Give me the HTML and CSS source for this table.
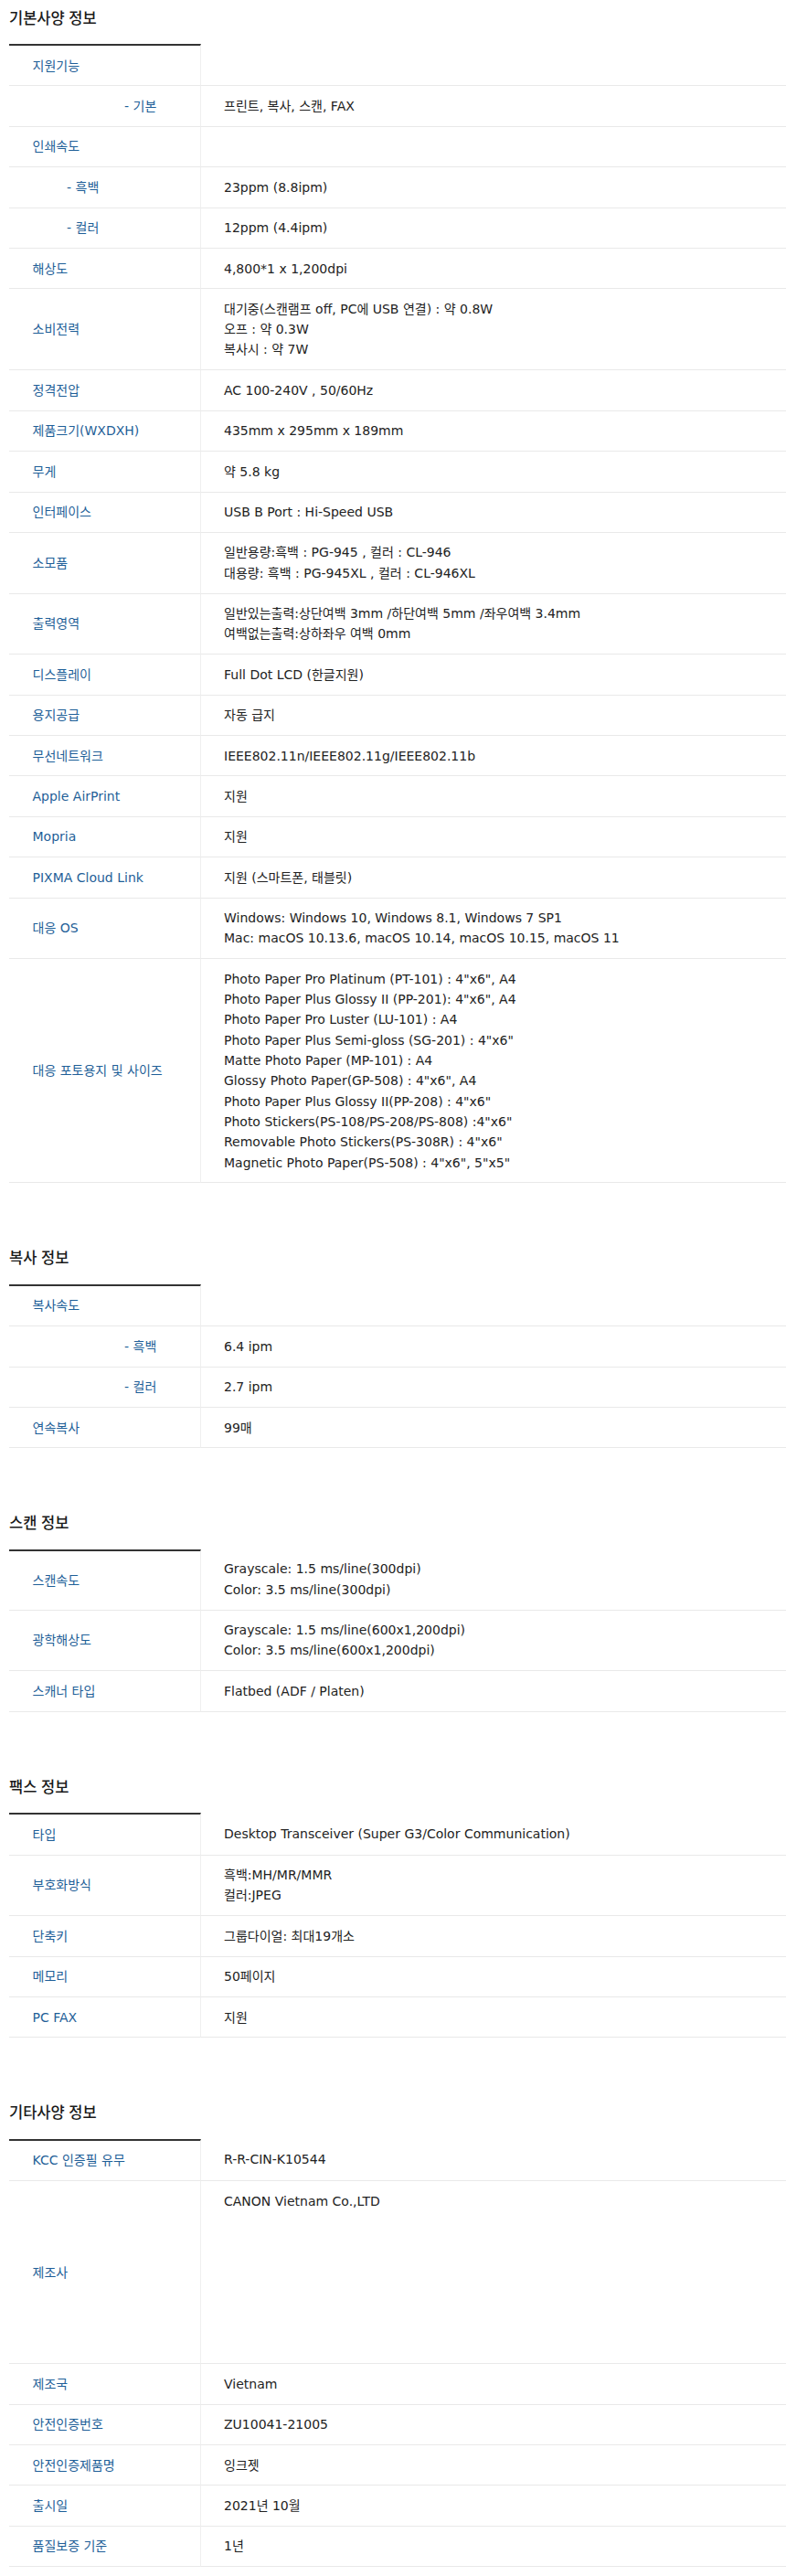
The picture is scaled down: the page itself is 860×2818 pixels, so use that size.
FILE: index.html
```html
<!DOCTYPE html>
<html lang="ko">
<head>
  <meta charset="UTF-8" />
  <meta name="viewport" content="width=device-width, initial-scale=1.0"/>
  <title>제품 사양</title>
  <link rel="stylesheet" href="styles.css">
</head>
<body>

<div class="spec">

  <section class="spec-group">
    <h3 class="spec-title">기본사양 정보</h3>
    <table class="spec-table">
      <colgroup><col class="col-label"><col></colgroup>
      <tr><th>지원기능</th><td></td></tr>
      <tr><th class="sub-deep">- 기본</th><td>프린트, 복사, 스캔, FAX</td></tr>
      <tr><th>인쇄속도</th><td></td></tr>
      <tr><th class="sub">- 흑백</th><td>23ppm (8.8ipm)</td></tr>
      <tr><th class="sub">- 컬러</th><td>12ppm (4.4ipm)</td></tr>
      <tr><th>해상도</th><td>4,800*1 x 1,200dpi</td></tr>
      <tr><th>소비전력</th><td>대기중(스캔램프 off, PC에 USB 연결) : 약 0.8W<br>오프 : 약 0.3W<br>복사시 : 약 7W</td></tr>
      <tr><th>정격전압</th><td>AC 100-240V , 50/60Hz</td></tr>
      <tr><th>제품크기(WXDXH)</th><td>435mm x 295mm x 189mm</td></tr>
      <tr><th>무게</th><td>약 5.8 kg</td></tr>
      <tr><th>인터페이스</th><td>USB B Port : Hi-Speed USB</td></tr>
      <tr><th>소모품</th><td>일반용량:흑백 : PG-945 , 컬러 : CL-946<br>대용량: 흑백 : PG-945XL , 컬러 : CL-946XL</td></tr>
      <tr><th>출력영역</th><td>일반있는출력:상단여백 3mm /하단여백 5mm /좌우여백 3.4mm<br>여백없는출력:상하좌우 여백 0mm</td></tr>
      <tr><th>디스플레이</th><td>Full Dot LCD (한글지원)</td></tr>
      <tr><th>용지공급</th><td>자동 급지</td></tr>
      <tr><th>무선네트워크</th><td>IEEE802.11n/IEEE802.11g/IEEE802.11b</td></tr>
      <tr><th>Apple AirPrint</th><td>지원</td></tr>
      <tr><th>Mopria</th><td>지원</td></tr>
      <tr><th>PIXMA Cloud Link</th><td>지원 (스마트폰, 태블릿)</td></tr>
      <tr><th>대응 OS</th><td>Windows: Windows 10, Windows 8.1, Windows 7 SP1<br>Mac: macOS 10.13.6, macOS 10.14, macOS 10.15, macOS 11</td></tr>
      <tr>
        <th>대응 포토용지 및 사이즈</th>
        <td>
          Photo Paper Pro Platinum (PT-101) : 4"x6", A4<br>
          Photo Paper Plus Glossy II (PP-201): 4"x6", A4<br>
          Photo Paper Pro Luster (LU-101) : A4<br>
          Photo Paper Plus Semi-gloss (SG-201) : 4"x6"<br>
          Matte Photo Paper (MP-101) : A4<br>
          Glossy Photo Paper(GP-508) : 4"x6", A4<br>
          Photo Paper Plus Glossy II(PP-208) : 4"x6"<br>
          Photo Stickers(PS-108/PS-208/PS-808) :4"x6"<br>
          Removable Photo Stickers(PS-308R) : 4"x6"<br>
          Magnetic Photo Paper(PS-508) : 4"x6", 5"x5"
        </td>
      </tr>
    </table>
  </section>

  <section class="spec-group">
    <h3 class="spec-title">복사 정보</h3>
    <table class="spec-table">
      <colgroup><col class="col-label"><col></colgroup>
      <tr><th>복사속도</th><td></td></tr>
      <tr><th class="sub-deep">- 흑백</th><td>6.4 ipm</td></tr>
      <tr><th class="sub-deep">- 컬러</th><td>2.7 ipm</td></tr>
      <tr><th>연속복사</th><td>99매</td></tr>
    </table>
  </section>

  <section class="spec-group">
    <h3 class="spec-title">스캔 정보</h3>
    <table class="spec-table">
      <colgroup><col class="col-label"><col></colgroup>
      <tr><th>스캔속도</th><td>Grayscale: 1.5 ms/line(300dpi)<br>Color: 3.5 ms/line(300dpi)</td></tr>
      <tr><th>광학해상도</th><td>Grayscale: 1.5 ms/line(600x1,200dpi)<br>Color: 3.5 ms/line(600x1,200dpi)</td></tr>
      <tr><th>스캐너 타입</th><td>Flatbed (ADF / Platen)</td></tr>
    </table>
  </section>

  <section class="spec-group">
    <h3 class="spec-title">팩스 정보</h3>
    <table class="spec-table">
      <colgroup><col class="col-label"><col></colgroup>
      <tr><th>타입</th><td>Desktop Transceiver (Super G3/Color Communication)</td></tr>
      <tr><th>부호화방식</th><td>흑백:MH/MR/MMR<br>컬러:JPEG</td></tr>
      <tr><th>단축키</th><td>그룹다이얼: 최대19개소</td></tr>
      <tr><th>메모리</th><td>50페이지</td></tr>
      <tr><th>PC FAX</th><td>지원</td></tr>
    </table>
  </section>

  <section class="spec-group">
    <h3 class="spec-title">기타사양 정보</h3>
    <table class="spec-table">
      <colgroup><col class="col-label"><col></colgroup>
      <tr><th>KCC 인증필 유무</th><td>R-R-CIN-K10544</td></tr>
      <tr><th>제조사</th><td>CANON Vietnam Co.,LTD<div class="maker-space"></div></td></tr>
      <tr><th>제조국</th><td>Vietnam</td></tr>
      <tr><th>안전인증번호</th><td>ZU10041-21005</td></tr>
      <tr><th>안전인증제품명</th><td>잉크젯</td></tr>
      <tr><th>출시일</th><td>2021년 10월</td></tr>
      <tr><th>품질보증 기준</th><td>1년</td></tr>
    </table>
  </section>

</div>

</body>
</html>
```

FILE: styles.css
```css
body {
  margin: 0;
  padding: 0 0 11px 10px;
  font-family: "DejaVu Sans", "Noto Sans CJK KR", sans-serif;
  font-size: 14px;
  color: #222;
  background-color: #fff;
}

/* section margin collapses with the title's top margin */
.spec-group + .spec-group {
  margin-top: 69px;
}

.spec-title {
  margin: 6.5px 0 17.5px;
  font-family: "Noto Sans CJK KR", sans-serif;
  font-size: 16.5px;
  line-height: 24px;
  font-weight: 500;
  color: #1a1a1a;
}

.spec-table {
  width: 100%;
  table-layout: fixed;
  border-collapse: separate;
  border-spacing: 0;
}

.col-label {
  width: 210px;
}

.spec-table th,
.spec-table td {
  box-sizing: border-box;
  padding: 10.55px 0 10.55px 25px;
  line-height: 22.3px;
  text-align: left;
  vertical-align: middle;
  font-weight: normal;
  border-bottom: 1px solid #e9e9e9;
}

.spec-table th {
  width: 210px;
  padding-left: 25.5px;
  color: #1f5f98;
  border-right: 1px solid #efefef;
}

.spec-table tr:first-child th {
  border-top: 2px solid #333;
}

.spec-table th.sub {
  padding-left: 63px;
}

.spec-table th.sub-deep {
  padding-left: 126px;
}

.maker-space {
  height: 155.6px;
}
```
